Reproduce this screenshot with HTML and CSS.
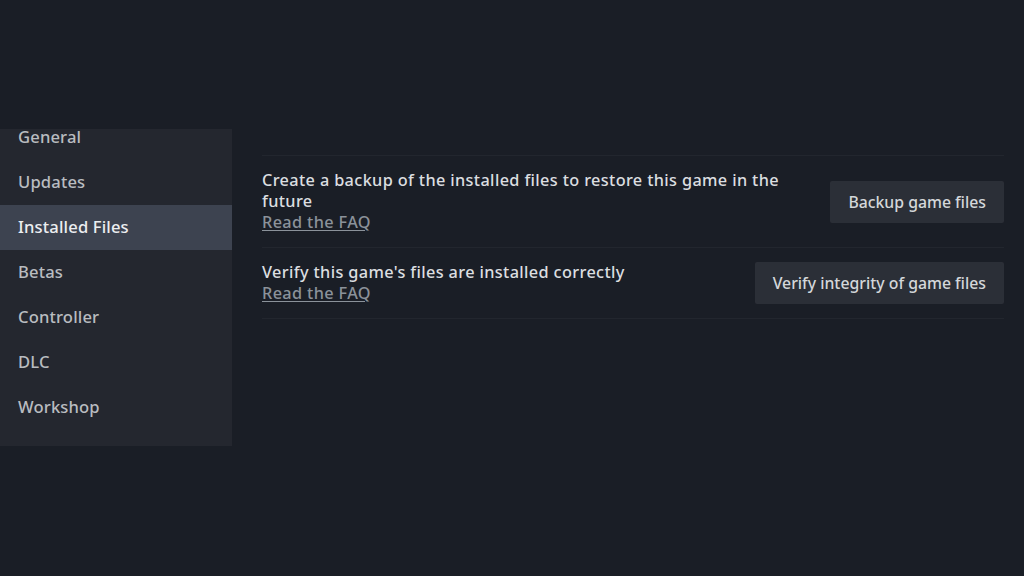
FILE: index.html
```html
<!DOCTYPE html>
<html lang="en">
<head>
<meta charset="utf-8">
<title>Properties - Installed Files</title>
<link rel="stylesheet" href="styles.css">
</head>
<body>
<div class="page">
  <nav class="sidebar">
    <ul class="nav-list">
      <li class="nav-item">General</li>
      <li class="nav-item">Updates</li>
      <li class="nav-item active">Installed Files</li>
      <li class="nav-item">Betas</li>
      <li class="nav-item">Controller</li>
      <li class="nav-item">DLC</li>
      <li class="nav-item">Workshop</li>
    </ul>
  </nav>
  <main class="content">
    <div class="rows">
      <div class="row">
        <div class="row-text">
          <div class="desc">Create a backup of the installed files to restore this game in the future</div>
          <a class="faq" href="#">Read the FAQ</a>
        </div>
        <button class="btn">Backup game files</button>
      </div>
      <div class="row">
        <div class="row-text">
          <div class="desc">Verify this game's files are installed correctly</div>
          <a class="faq" href="#">Read the FAQ</a>
        </div>
        <button class="btn">Verify integrity of game files</button>
      </div>
    </div>
  </main>
</div>
</body>
</html>
```
FILE: styles.css
```css
html, body {
  margin: 0;
  padding: 0;
  width: 1024px;
  height: 576px;
  overflow: hidden;
  background: #1a1e26;
  font-family: "Noto Sans", "Liberation Sans", Arial, sans-serif;
}

.page {
  display: flex;
  align-items: flex-start;
}

.sidebar {
  margin-top: 129px;
  width: 232px;
  height: 317px;
  background: #24272f;
  overflow: hidden;
  box-sizing: border-box;
}

.nav-list {
  list-style: none;
  margin: -14px 0 0 0;
  padding: 0;
}

.nav-item {
  height: 45px;
  display: flex;
  align-items: center;
  padding-left: 18px;
  font-size: 16.6px;
  line-height: 1;
  font-weight: 500;
  letter-spacing: 0.15px;
  color: #b9bcc0;
}

.nav-item.active {
  background: #3d4350;
  color: #eceef0;
}

.content {
  margin-left: 30px;
  padding-top: 155px;
  width: 742px;
}

.rows {
  border-top: 1px solid #22262e;
}

.row {
  display: flex;
  align-items: center;
  justify-content: space-between;
  gap: 24px;
  padding: 14px 0;
  border-bottom: 1px solid #22262e;
}

.row-text {
  flex: 1;
  font-size: 16.3px;
  line-height: 21px;
  font-weight: 500;
  letter-spacing: 0.36px;
}

.desc {
  color: #dcdee0;
}

.faq {
  color: #8b929a;
  text-decoration: underline;
  text-underline-offset: 2px;
}

.btn {
  flex: none;
  height: 42px;
  padding: 0 18px;
  border: none;
  border-radius: 2px;
  background: #2b2f37;
  color: #d4d7da;
  font-family: inherit;
  font-size: 15.8px;
  font-weight: 500;
}
```
